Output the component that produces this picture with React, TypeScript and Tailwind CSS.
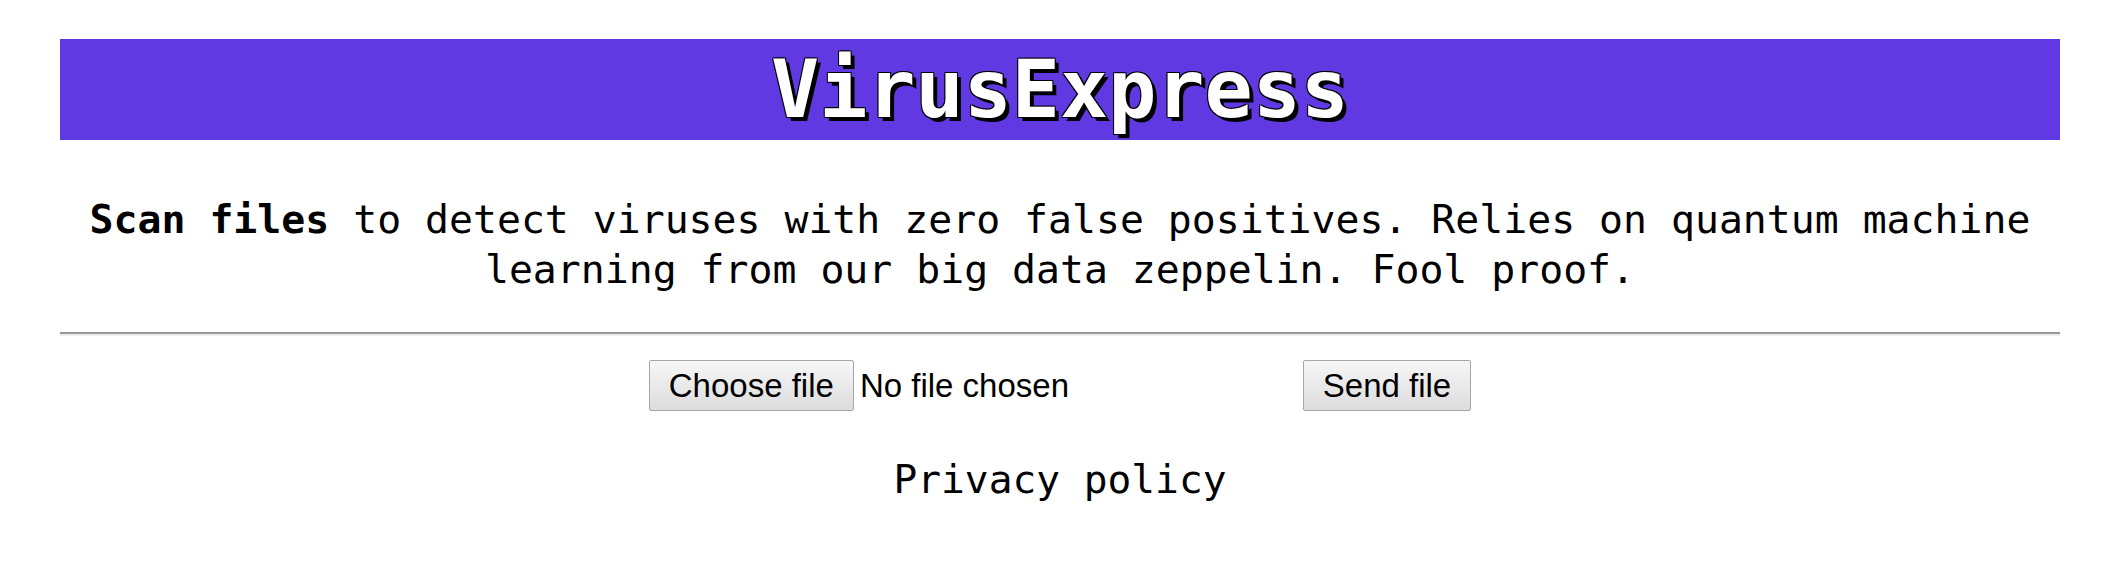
import React from 'react';

const mono = "font-['DejaVu_Sans_Mono','Liberation_Mono',monospace]";
const sans = "font-['Liberation_Sans',Arial,sans-serif]";

function FakeButton({ children }: { children: React.ReactNode }) {
  return (
    <button
      type="button"
      className={`${sans} h-[51px] px-[19px] text-[33px] leading-none text-black bg-gradient-to-b from-[#f7f7f7] to-[#dcdcdc] border border-[#a6a6a6] rounded-[2px]`}
    >
      {children}
    </button>
  );
}

export default function App() {
  return (
    <div className="min-h-screen bg-white pl-[60px] pr-[65px] pt-[39px] text-black">
      <header className="h-[101px] bg-[#6139e3] flex items-center justify-center">
        <h1
          className={`${mono} text-[80px] font-bold leading-none text-white [text-shadow:4px_4px_0_#000,-1px_-1px_0_#000,1px_-1px_0_#000,-1px_1px_0_#000,1px_1px_0_#000]`}
        >
          VirusExpress
        </h1>
      </header>

      <p className={`${mono} mt-[54px] text-center text-[39.8px] leading-[50px]`}>
        <strong className="font-bold">Scan files</strong> to detect viruses with zero false positives. Relies on
        quantum machine learning from our big data zeppelin. Fool proof.
      </p>

      <hr className="mt-[38px] border-0 border-t-2 border-t-[#9a9a9a] border-b-2 border-b-[#eeeeee]" />

      <form className="mt-[24px] flex items-center justify-center">
        <div className="w-[645px] flex items-center">
          <FakeButton>Choose file</FakeButton>
          <span className={`${sans} ml-[6px] text-[33px] leading-none`}>No file chosen</span>
        </div>
        <div className="ml-[9px]">
          <FakeButton>Send file</FakeButton>
        </div>
      </form>

      <div className="mt-[39px] text-center">
        <a href="#" className={`${mono} text-[39.5px] text-black no-underline`}>
          Privacy policy
        </a>
      </div>
    </div>
  );
}
